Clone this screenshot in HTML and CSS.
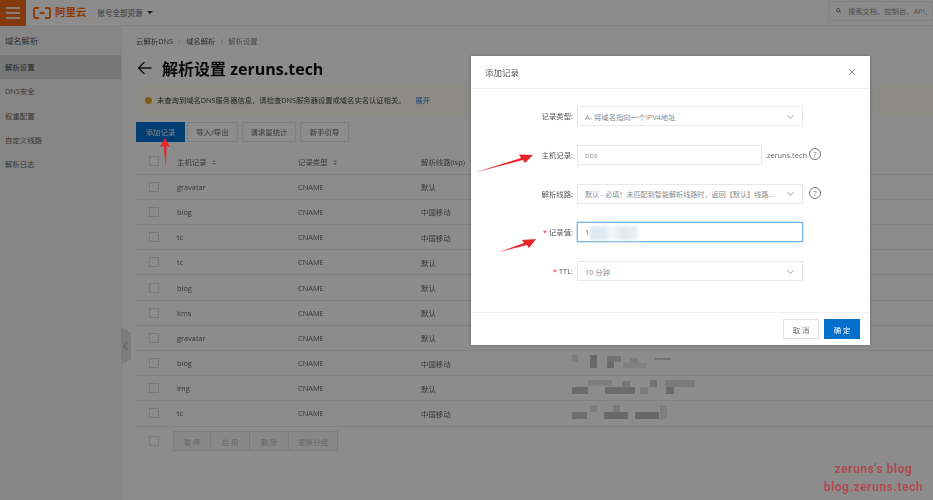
FILE: index.html
```html
<!DOCTYPE html>
<html lang="zh-CN">
<head>
<meta charset="utf-8">
<title>解析设置</title>
<link rel="stylesheet" href="styles.css">
</head>
<body>
<div class="app">
  <header class="topbar">
    <div class="menu-btn"><span></span><span></span><span></span></div>
    <div class="logo">
      <svg width="18" height="12" viewBox="0 0 18 12"><path d="M6 1H2.500Q1 1 1 2.500v7Q1 11 2.500 11H6M12 1h3.500Q17 1 17 2.500v7Q17 11 15.500 11H12M6.500 6h5" fill="none" stroke-width="1.800"/></svg>
      <span>阿里云</span>
    </div>
    <div class="account">账号全部资源 <i></i></div>
    <div class="search">
      <svg width="9" height="9" viewBox="0 0 9 9"><circle cx="4" cy="4" r="3" fill="none" stroke="#4a4a4a" stroke-width="1.300"/><path d="M6.200 6.200L8.500 8.500" stroke="#4a4a4a" stroke-width="1.300"/></svg>
      <span>搜索文档、控制台、API、</span>
    </div>
  </header>
  <div class="body">
    <aside class="sidebar">
      <div class="side-title">域名解析</div>
      <nav class="side-nav">
        <a class="active">解析设置</a>
        <a>DNS安全</a>
        <a>权重配置</a>
        <a>自定义线路</a>
        <a>解析日志</a>
      </nav>
      <div class="collapse"></div>
    </aside>
    <main class="main">
      <div class="crumbs"><span>云解析DNS</span><b>/</b><span>域名解析</span><b>/</b><span class="last">解析设置</span></div>
      <h1 class="title">
        <svg width="15" height="14" viewBox="0 0 15 14"><path d="M14.500 7H1.500M7.500 1L1.500 7l6 6" fill="none" stroke="#222" stroke-width="1.300"/></svg>
        <span>解析设置 zeruns.tech</span>
      </h1>
      <div class="alert"><i class="dot"></i><span>未查询到域名DNS服务器信息，请检查DNS服务器设置或域名实名认证相关。</span><a>展开</a></div>
      <div class="toolbar">
        <button class="btn primary">添加记录</button>
        <button class="btn w51">导入/导出</button>
        <button class="btn w54">请求量统计</button>
        <button class="btn w49">新手引导</button>
      </div>
      <table class="records">
        <colgroup><col class="c1"><col class="c2"><col class="c3"><col class="c4"><col></colgroup>
        <thead>
          <tr><th><i class="check"></i></th><th>主机记录<em class="sort"></em></th><th>记录类型<em class="sort"></em></th><th>解析线路(isp)</th><th></th></tr>
        </thead>
        <tbody>
          <tr><td><i class="check"></i></td><td>gravatar</td><td>CNAME</td><td>默认</td><td></td></tr>
          <tr><td><i class="check"></i></td><td>blog</td><td>CNAME</td><td>中国移动</td><td></td></tr>
          <tr><td><i class="check"></i></td><td>tc</td><td>CNAME</td><td>中国移动</td><td></td></tr>
          <tr><td><i class="check"></i></td><td>tc</td><td>CNAME</td><td>默认</td><td></td></tr>
          <tr><td><i class="check"></i></td><td>blog</td><td>CNAME</td><td>默认</td><td></td></tr>
          <tr><td><i class="check"></i></td><td>kms</td><td>CNAME</td><td>默认</td><td></td></tr>
          <tr><td><i class="check"></i></td><td>gravatar</td><td>CNAME</td><td>默认</td><td></td></tr>
          <tr><td><i class="check"></i></td><td>blog</td><td>CNAME</td><td>中国移动</td>
            <td><svg class="mosaic" width="110" height="18" viewBox="0 0 110 18"><rect x="2" y="1" width="6" height="7" fill="#e6e6e6"/><rect x="20" y="1" width="7" height="13" fill="#bdbdbd"/><rect x="37" y="2" width="14" height="6" fill="#cfcfcf"/><rect x="37" y="8" width="7" height="6" fill="#bdbdbd"/><rect x="60" y="4" width="8" height="10" fill="#e0e0e0"/><rect x="53" y="9" width="24" height="5" fill="#ececec"/><rect x="85" y="4" width="16" height="2" fill="#cfcfcf"/></svg></td></tr>
          <tr><td><i class="check"></i></td><td>img</td><td>CNAME</td><td>默认</td>
            <td><svg class="mosaic" width="140" height="18" viewBox="0 0 140 18"><rect x="18" y="1" width="24" height="6" fill="#e6e6e6"/><rect x="52" y="2" width="8" height="7" fill="#d5d5d5"/><rect x="80" y="1" width="7" height="7" fill="#cfcfcf"/><rect x="95" y="1" width="30" height="7" fill="#dedede"/><rect x="2" y="8" width="16" height="7" fill="#c4c4c4"/><rect x="35" y="8" width="30" height="7" fill="#c4c4c4"/><rect x="70" y="8" width="8" height="7" fill="#e0e0e0"/><rect x="96" y="8" width="8" height="7" fill="#bdbdbd"/></svg></td></tr>
          <tr><td><i class="check"></i></td><td>tc</td><td>CNAME</td><td>中国移动</td>
            <td><svg class="mosaic" width="110" height="18" viewBox="0 0 110 18"><rect x="20" y="1" width="7" height="7" fill="#e0e0e0"/><rect x="43" y="1" width="7" height="7" fill="#dedede"/><rect x="90" y="1" width="7" height="14" fill="#e6e6e6"/><rect x="2" y="8" width="15" height="7" fill="#c9c9c9"/><rect x="34" y="8" width="24" height="7" fill="#bdbdbd"/><rect x="65" y="8" width="24" height="7" fill="#bdbdbd"/></svg></td></tr>
        </tbody>
      </table>
      <div class="batch">
        <i class="check"></i>
        <div class="batch-btns"><button class="bbtn b36">暂 停</button><button class="bbtn b38">启 用</button><button class="bbtn b38">删 除</button><button class="bbtn b48">更换分组</button></div>
      </div>
    </main>
  </div>

  <div class="backdrop"></div>

  <section class="modal">
    <div class="modal-head"><span>添加记录</span><svg width="8" height="8" viewBox="0 0 8 8"><path d="M1 1l6 6M7 1L1 7" stroke="#999" stroke-width="1"/></svg></div>
    <div class="form">
      <label class="lbl">记录类型:</label>
      <div class="field select"><span>A- 将域名指向一个IPV4地址</span><i class="chev"></i></div>

      <label class="lbl">主机记录:</label>
      <div class="host">
        <div class="field grow"><span>bbs</span></div>
        <span class="suffix">.zeruns.tech</span>
        <i class="help">?</i>
      </div>

      <label class="lbl">解析线路:</label>
      <div class="line">
        <div class="field select tight"><span>默认 - 必填！未匹配到智能解析线路时，返回【默认】线路...</span><i class="chev"></i></div>
        <i class="help">?</i>
      </div>

      <label class="lbl"><u>*</u> 记录值:</label>
      <div class="field focus"><span>1</span><i class="smear"></i></div>

      <label class="lbl"><u>*</u> TTL:</label>
      <div class="field select"><span>10 分钟</span><i class="chev"></i></div>
    </div>
    <div class="modal-foot">
      <button class="mbtn">取 消</button>
      <button class="mbtn ok">确 定</button>
    </div>
  </section>

  <svg class="arrow a1" width="14" height="31" viewBox="0 0 14 31"><path d="M7 0L12 9 8.500 8 8 30 5.500 8 2 9z" fill="#e8262a"/></svg>
  <svg class="arrow a2" width="60" height="21" viewBox="0 0 60 21"><path d="M0 19.500L46 5 44 1.500 58 2 50 10 48 7z" fill="#e8262a"/></svg>
  <svg class="arrow a3" width="40" height="16" viewBox="0 0 40 16"><path d="M0 15L25 6 23 3 37 2 30 11 28 8z" fill="#e8262a"/></svg>

  <div class="watermark">zeruns's blog<br>blog.zeruns.tech</div>
</div>
</body>
</html>
```

FILE: styles.css
```css
* { box-sizing: border-box; }
html, body { margin: 0; height: 100%; }
body {
  font-family: "Open Sans", "Noto Sans CJK SC", sans-serif;
  font-size: 7.400px;
  color: #555;
  background: #fff;
  overflow: hidden;
}
button { font-family: inherit; }

.app { position: relative; width: 933px; height: 500px; overflow: hidden; filter: blur(.35px); }

/* top bar */
.topbar {
  height: 26px;
  display: flex;
  align-items: center;
  background: #fff;
  border-bottom: 1px solid #eee;
}
.menu-btn {
  width: 26px;
  height: 26px;
  background: #f26a1b;
  display: flex;
  flex-direction: column;
  justify-content: center;
  align-items: center;
  gap: 3px;
}
.menu-btn span { width: 14px; height: 2px; background: #f4e3d6; }
.logo { display: flex; align-items: center; gap: 4px; margin-left: 7px; }
.logo svg path { stroke: #ff6a00; }
.logo span { font-size: 10.500px; font-weight: 700; color: #ff6a00; line-height: 1; }
.account { margin-left: 11px; font-size: 7.500px; color: #666; display: flex; align-items: center; gap: 3px; }
.account i { width: 0; height: 0; border: 3px solid transparent; border-top-color: #333; border-bottom: 0; margin-left: 1px; }
.search {
  margin-left: auto;
  margin-top: -4px;
  width: 105px;
  height: 20px;
  display: flex;
  align-items: center;
  gap: 7px;
  padding-left: 7px;
  border: 1px solid #f0f0f0;
  color: #8a8a8a;
  font-size: 7.300px;
  white-space: nowrap;
  overflow: hidden;
}

.body { display: flex; height: 474px; }

/* sidebar */
.sidebar {
  position: relative;
  width: 122px;
  flex: none;
  background: #f4f4f4;
  border-right: 1px solid #ececec;
}
.side-title { height: 29px; line-height: 30px; padding-left: 5px; font-size: 8.300px; color: #555; }
.side-nav a { display: block; height: 24.300px; line-height: 24.300px; padding-left: 5px; color: #666; }
.side-nav a.active { background: #d9d9d9; color: #444; }
.collapse {
  position: absolute;
  left: 121px;
  top: 301px;
  width: 10px;
  height: 38px;
  background: #e0e0e0;
  clip-path: polygon(0 0, 100% 16%, 100% 84%, 0 100%);
}
.collapse::after {
  content: "";
  position: absolute;
  left: 3px;
  top: 16px;
  width: 5px;
  height: 5px;
  border-left: 1px solid #aaa;
  border-top: 1px solid #aaa;
  transform: rotate(-45deg);
}

/* main */
.main { flex: 1; min-width: 0; padding-left: 14px; }
.crumbs { height: 29px; display: flex; align-items: center; gap: 5px; color: #555; }
.crumbs b { font-weight: 400; color: #bbb; }
.crumbs .last { color: #888; }
.title {
  margin: 0;
  height: 25px;
  display: flex;
  align-items: center;
  gap: 10px;
  font-size: 16px;
  font-weight: 700;
  color: #111;
  white-space: nowrap;
}
.title svg { flex: none; margin-left: 1px; }
.alert {
  margin: 5px 0 0 0;
  height: 30px;
  display: flex;
  align-items: center;
  padding-left: 9px;
  background: #fffdf3;
  color: #444;
  font-size: 7.300px;
}
.alert .dot { width: 7px; height: 7px; border-radius: 50%; background: #f5a623; margin-right: 5px; }
.alert a { margin-left: 10px; color: #2f7fc9; }

.toolbar { display: flex; margin-top: 7px; }
.btn {
  width: 49px;
  height: 19.500px;
  padding: 0;
  margin-left: 3px;
  border: 1px solid #e4e4e4;
  background: #fff;
  color: #666;
  font-size: 7.400px;
}
.btn.primary { margin-left: 0; background: #0070cc; border-color: #0070cc; color: #e6f0f8; }
.btn.w51 { width: 51px; margin-left: 2px; }
.btn.w54 { width: 54px; margin-left: 4px; }
.btn.w49 { margin-left: 4px; }

/* table */
.records { width: 100%; table-layout: fixed; border-collapse: collapse; margin-top: 7.500px; }
.records .c1 { width: 41px; }
.records .c2 { width: 121px; }
.records .c3 { width: 123px; }
.records .c4 { width: 149px; }
.records tr { height: 25.200px; border-bottom: 1px solid #e9e9e9; }
.records th, .records td { padding: 0; text-align: left; font-weight: 400; color: #666; font-size: 7.400px; white-space: nowrap; overflow: hidden; }
.records th:first-child, .records td:first-child { padding-left: 13px; }
.sort { display: inline-flex; flex-direction: column; gap: 1px; margin-left: 5px; vertical-align: middle; }
.sort::before, .sort::after { content: ""; width: 0; height: 0; border: 2px solid transparent; }
.sort::before { border-bottom-color: #aaa; border-top: 0; }
.sort::after { border-top-color: #aaa; border-bottom: 0; }
.check { display: block; width: 10px; height: 10px; border: 1px solid #dcdcdc; background: #fff; }
.mosaic { display: block; filter: blur(.5px); }

.batch { display: flex; align-items: center; height: 33px; padding-left: 13px; margin-top: -2px; }
.batch .check { opacity: .85; }
.batch-btns { display: flex; margin-left: 14px; }
.bbtn {
  height: 20px;
  padding: 0;
  border: 1px solid #e2e2e2;
  border-left-width: 0;
  background: #f7f7f7;
  color: #bdbdbd;
  font-size: 7.400px;
}
.bbtn:first-child { border-left-width: 1px; }
.b36 { width: 38px; }
.b38 { width: 39px; }
.b48 { width: 49px; }

/* overlay */
.backdrop { position: absolute; inset: 0; background: rgba(0, 0, 0, .45); }

.modal {
  position: absolute;
  left: 471px;
  top: 56px;
  width: 399px;
  height: 289px;
  background: #fff;
  box-shadow: 0 0 3px rgba(0, 0, 0, .3);
  display: flex;
  flex-direction: column;
}
.modal-head {
  height: 33px;
  flex: none;
  display: flex;
  align-items: center;
  justify-content: space-between;
  padding: 0 14px;
  border-bottom: 1px solid #f1f1f1;
  font-size: 8.500px;
  color: #555;
}
.form {
  flex: 1;
  display: grid;
  grid-template-columns: 102px 226px;
  column-gap: 4px;
  row-gap: 18.800px;
  align-content: start;
  padding-top: 17px;
}
.lbl { height: 20px; line-height: 20px; text-align: right; font-size: 7.400px; color: #555; }
.lbl u { text-decoration: none; color: #e8262a; }
.field {
  position: relative;
  height: 20px;
  display: flex;
  align-items: center;
  justify-content: space-between;
  padding: 0 7px;
  border: 1px solid #e8e8e8;
  background: #fff;
  color: #999;
  font-size: 7.400px;
  white-space: nowrap;
  min-width: 0;
}
.select { color: #8a8a8a; }
.tight { font-size: 7.100px; }
.grow { width: 185px; flex: none; }
.host, .line { display: flex; align-items: center; position: relative; }
.suffix { margin-left: 3px; color: #666; font-size: 7.400px; white-space: nowrap; }
.line .select { width: 226px; flex: none; }
.help {
  position: absolute;
  left: 232px;
  top: 3px;
  width: 12px;
  height: 12px;
  border: 1px solid #777;
  border-radius: 50%;
  font-style: normal;
  font-size: 8px;
  line-height: 10px;
  text-align: center;
  color: #777;
}
.focus { border-color: #7fb4e0; box-shadow: 0 0 0 .5px #a9cdea; color: #666; justify-content: flex-start; }
.smear {
  position: absolute;
  left: 12px;
  top: 3px;
  width: 48px;
  height: 14px;
  background: linear-gradient(90deg, #dfe9f2 0, #dfe9f2 30%, #f6f8fa 45%, #e4e6ea 70%, #eef0f2 100%);
  filter: blur(1.500px);
}
.chev {
  width: 5px;
  height: 5px;
  border-right: 1px solid #bbb;
  border-bottom: 1px solid #bbb;
  transform: rotate(45deg);
  margin: -2px 2px 0 0;
  flex: none;
}
.modal-foot {
  flex: none;
  height: 33px;
  display: flex;
  justify-content: flex-end;
  align-items: flex-start;
  gap: 5px;
  padding: 6px 10px 0 0;
  border-top: 1px solid #f1f1f1;
}
.mbtn {
  width: 36px;
  height: 20px;
  padding: 0;
  border: 1px solid #e3e3e3;
  background: #fff;
  color: #666;
  font-size: 7.400px;
}
.mbtn.ok { background: #0070cc; border-color: #0070cc; color: #fff; }

.arrow { position: absolute; }
.a1 { left: 158px; top: 138px; }
.a2 { left: 475px; top: 153px; }
.a3 { left: 499px; top: 237px; }

.watermark {
  position: absolute;
  right: 10px;
  top: 460px;
  text-align: center;
  font-family: "Roboto", sans-serif;
  font-size: 12px;
  font-weight: 700;
  letter-spacing: .55px;
  line-height: 18px;
  color: #b04a50;
}
```
